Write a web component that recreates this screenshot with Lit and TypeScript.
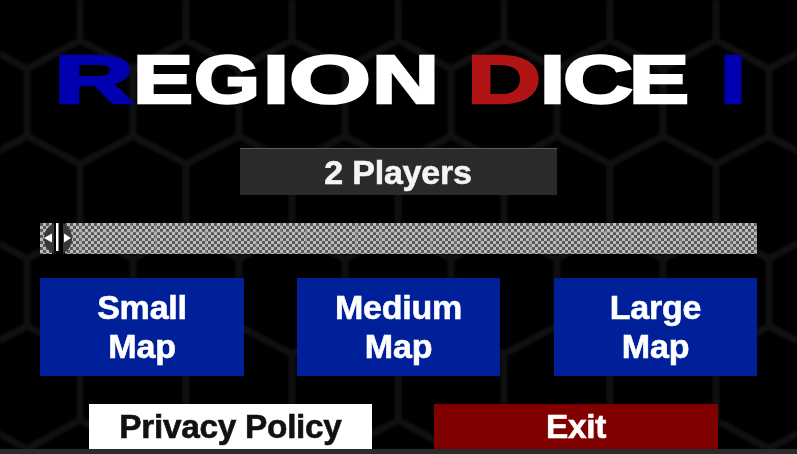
import { LitElement, html, css, svg } from "lit";
import { customElement } from "lit/decorators.js";

const LETTERS: [string, number, number, string][] = [
  ["R", 54, 80, "#0000b0"],
  ["E", 133, 60, "#fff"],
  ["G", 194, 66, "#fff"],
  ["I", 263, 26, "#fff"],
  ["O", 289, 82, "#fff"],
  ["N", 372, 67, "#fff"],
  ["D", 467, 74, "#b01414"],
  ["I", 540, 25, "#fff"],
  ["C", 563, 70, "#fff"],
  ["E", 629, 60, "#fff"],
  ["I", 720, 26, "#0000b0"],
];

@customElement("app-root")
export class AppRoot extends LitElement {
  static styles = css`
    :host {
      display: block;
      position: relative;
      width: 797px;
      height: 454px;
      overflow: hidden;
      background: #000;
      font-family: "Liberation Sans", Arial, sans-serif;
      font-weight: 700;
    }
    .hex {
      position: absolute;
      inset: 0;
      width: 100%;
      height: 100%;
      filter: blur(1px);
    }
    .content {
      position: relative;
      display: flex;
      flex-direction: column;
      height: 100%;
      filter: blur(0.4px);
    }
    .logo {
      display: block;
      width: 797px;
      height: 148px;
      flex: none;
    }
    .logo text {
      font-family: "Liberation Sans", Arial, sans-serif;
      font-weight: 700;
      font-size: 68px;
      stroke-width: 2.5px;
      stroke-linejoin: miter;
    }
    .players {
      align-self: center;
      width: 317px;
      height: 47px;
      margin-left: -1px;
      box-sizing: border-box;
      background: #2a2a2a;
      border-top: 1px solid #5c5c5c;
      color: #f4f4f4;
      font-size: 34px;
      letter-spacing: -0.2px;
      -webkit-text-stroke: 0.6px currentColor;
      display: flex;
      align-items: center;
      justify-content: center;
      flex: none;
    }
    .slider {
      position: relative;
      margin: 28px 40px 0;
      height: 31px;
      flex: none;
      background-color: #888;
      background-image:
        linear-gradient(transparent 8px, rgba(170, 170, 170, 0.3) 8px 10px, transparent 10px),
        repeating-linear-gradient(90deg, transparent 0 23.5px, rgba(160, 160, 160, 0.4) 23.5px 25px),
        conic-gradient(#bcbcbc 25%, #585858 0 50%, #bcbcbc 0 75%, #585858 0);
      background-size: 100% 100%, 25px 100%, 6px 6px;
      background-position: 0 0, 17px 0, 0 0;
    }
    .thumb {
      position: absolute;
      left: 3px;
      top: 0;
      width: 31px;
      height: 31px;
    }
    .maps {
      display: flex;
      gap: 53px;
      margin: 24px 40px 0;
      flex: none;
    }
    .map {
      width: 203px;
      height: 98px;
      background: #00209a;
      color: #fff;
      font-size: 34px;
      letter-spacing: -0.2px;
      -webkit-text-stroke: 0.6px currentColor;
      line-height: 39px;
      text-align: center;
      display: flex;
      align-items: center;
      justify-content: center;
    }
    .map:first-child {
      width: 204px;
    }
    .map:last-child {
      margin-left: 1px;
    }
    .actions {
      display: flex;
      gap: 62px;
      margin: 28px 0 0 89px;
      flex: none;
    }
    .action {
      width: 283px;
      height: 45px;
      font-size: 33.4px;
      letter-spacing: -0.3px;
      -webkit-text-stroke: 0.6px currentColor;
      display: flex;
      align-items: center;
      justify-content: center;
    }
    .privacy {
      background: #fff;
      color: #111;
    }
    .exit {
      width: 284px;
      background: #800000;
      color: #fff;
    }
    .strip {
      flex: 1;
      background: #2a2a2a;
    }
  `;

  render() {
    return html`
      <svg class="hex" viewBox="0 0 797 454" aria-hidden="true">
        <defs>
          <pattern id="hexes" patternUnits="userSpaceOnUse" x="27" y="40" width="106" height="190">
            <path
              d="M53 -10V0L0 29V96L53 124V200M53 0L106 29V96L53 124"
              fill="none"
              stroke="#101010"
              stroke-width="7"
            />
          </pattern>
        </defs>
        <rect width="797" height="454" fill="url(#hexes)" />
      </svg>
      <div class="content">
        <svg class="logo" viewBox="0 0 797 148">
          <text y="103">
            ${LETTERS.map(
              ([c, x, w, fill], i) => svg`<tspan x=${x} textLength=${w} lengthAdjust="spacingAndGlyphs" fill=${fill} stroke=${fill}>${c}</tspan>${i === 5 ? " " : ""}`
            )}
          </text>
        </svg>
        <div class="players">2 Players</div>
        <div class="slider">
          <svg class="thumb" viewBox="0 0 31 31">
            <rect x="9" width="13" height="31" fill="#060606" />
            <path d="M11 0C4 4 1 9 1 15.5S4 27 11 31Z" fill="#383838" />
            <path d="M20 0C26 4 29 9 29 15.5S26 27 20 31Z" fill="#383838" />
            <rect x="13" width="2.5" height="28" fill="#fff" />
            <path d="M1 15L9 10.5V19.5Z M28 15L21 10.5V19.5Z" fill="#fff" />
          </svg>
        </div>
        <div class="maps">
          <div class="map">Small<br />Map</div>
          <div class="map">Medium<br />Map</div>
          <div class="map">Large<br />Map</div>
        </div>
        <div class="actions">
          <div class="action privacy">Privacy Policy</div>
          <div class="action exit">Exit</div>
        </div>
        <div class="strip"></div>
      </div>
    `;
  }
}
